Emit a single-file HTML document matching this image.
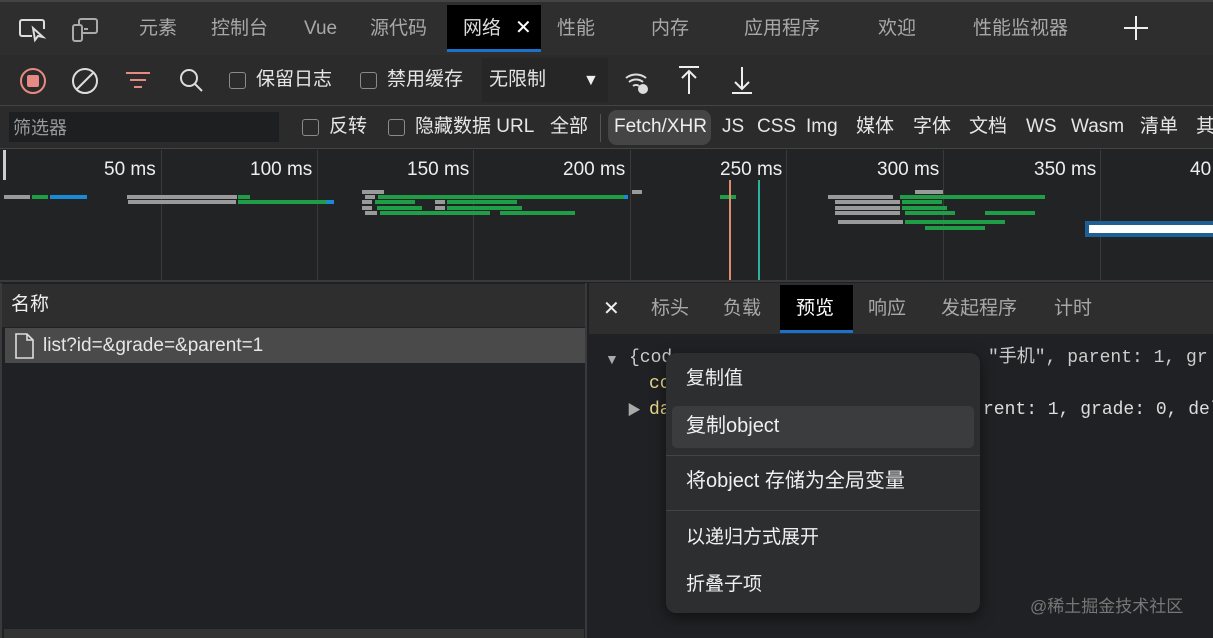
<!DOCTYPE html>
<html><head><meta charset="utf-8"><style>
*{box-sizing:border-box;margin:0;padding:0}
body{width:1213px;height:638px;overflow:hidden;background:#202124;font-family:"Liberation Sans","Noto Sans CJK SC",sans-serif;color:#d6d6d6;position:relative;font-size:19px;line-height:26px}
.a{position:absolute;white-space:nowrap}
.g{color:#a8a8a8}
.cb{position:absolute;width:17px;height:17px;border:1.5px solid #8a8a8a;border-radius:3px}
.vl{position:absolute;top:150px;width:1px;height:131px;background:#3a3a3a}
.b{position:absolute;height:4px}
.gr{background:#9a9a9a}.gn{background:#1f9d47}.bl{background:#1a8ad4}
.mono{font-family:"Liberation Mono","Noto Sans CJK SC",monospace;font-size:18px}
</style></head><body>
<div class="a" style="left:0;top:0;width:1213px;height:55px;background:#2e2e2e;border-top:2px solid #444"></div>
<svg class="a" style="left:18px;top:17px" width="30" height="28" viewBox="0 0 30 28" fill="none" stroke="#ddd" stroke-width="2"><path d="M14 19H4a2 2 0 0 1-2-2V5a2 2 0 0 1 2-2h20a2 2 0 0 1 2 2v7"/><path d="M15 11l2 12 3-4 5 1z" fill="#2e2e2e"/></svg>
<svg class="a" style="left:70px;top:17px" width="30" height="28" viewBox="0 0 30 28" fill="none" stroke="#aaa" stroke-width="2"><rect x="3" y="8" width="9" height="16" rx="2"/><path d="M9 8V4a2 2 0 0 1 2-2h14a2 2 0 0 1 2 2v10a2 2 0 0 1-2 2H12"/><path d="M14 12h4"/></svg>
<div class="a g" style="left:139px;top:16px">元素</div>
<div class="a g" style="left:211px;top:16px">控制台</div>
<div class="a g" style="left:304px;top:16px">Vue</div>
<div class="a g" style="left:370px;top:16px">源代码</div>
<div class="a" style="left:447px;top:5px;width:94px;height:47px;background:#000;border-bottom:3px solid #1a73c8"></div>
<div class="a" style="left:463px;top:16px;color:#ddd">网络</div>
<div class="a" style="left:515px;top:15px;color:#fff;font-size:20px">✕</div>
<div class="a g" style="left:557px;top:16px">性能</div>
<div class="a g" style="left:651px;top:16px">内存</div>
<div class="a g" style="left:744px;top:16px">应用程序</div>
<div class="a g" style="left:878px;top:16px">欢迎</div>
<div class="a g" style="left:973px;top:16px">性能监视器</div>
<svg class="a" style="left:1123px;top:15px" width="26" height="26" stroke="#eee" stroke-width="2"><path d="M13 1v24M1 13h24"/></svg>
<div class="a" style="left:0;top:55px;width:1213px;height:51px;background:#2b2b2b;border-bottom:1px solid #444"></div>
<svg class="a" style="left:19px;top:67px" width="28" height="28"><circle cx="14" cy="14" r="12" fill="none" stroke="#e88a84" stroke-width="2"/><rect x="8" y="8" width="12" height="12" rx="2" fill="#e88a84"/></svg>
<svg class="a" style="left:71px;top:67px" width="28" height="28" fill="none" stroke="#ddd" stroke-width="2"><circle cx="14" cy="14" r="12"/><path d="M6 22L22 6"/></svg>
<svg class="a" style="left:125px;top:70px" width="26" height="22" stroke="#e88a84" stroke-width="2"><path d="M1 3h24M5 10h16M9 17h8"/></svg>
<svg class="a" style="left:177px;top:67px" width="28" height="28" fill="none" stroke="#ddd" stroke-width="2"><circle cx="12" cy="11" r="8"/><path d="M18 17l7 7"/></svg>
<div class="cb" style="left:229px;top:72px"></div>
<div class="a" style="left:256px;top:67px;color:#e6e6e6">保留日志</div>
<div class="cb" style="left:360px;top:72px"></div>
<div class="a" style="left:387px;top:67px;color:#e6e6e6">禁用缓存</div>
<div class="a" style="left:482px;top:58px;width:126px;height:44px;background:#262626"></div>
<div class="a" style="left:489px;top:67px;color:#e6e6e6">无限制</div>
<div class="a" style="left:583px;top:68px;color:#eee;font-size:16px">▼</div>
<svg class="a" style="left:624px;top:68px" width="28" height="28" fill="none" stroke="#ddd" stroke-width="2"><path d="M2 10a16 16 0 0 1 20 0M5 14a11 11 0 0 1 14 0M9 18a5 5 0 0 1 6 0"/><circle cx="19" cy="21" r="4" fill="#ddd"/></svg>
<svg class="a" style="left:677px;top:65px" width="24" height="30" stroke="#eee" stroke-width="2" fill="none"><path d="M2 2h20M12 6v23M5 13l7-7 7 7"/></svg>
<svg class="a" style="left:730px;top:65px" width="24" height="30" stroke="#eee" stroke-width="2" fill="none"><path d="M2 28h20M12 2v22M5 17l7 7 7-7"/></svg>
<div class="a" style="left:0;top:106px;width:1213px;height:43px;background:#2b2b2b;border-bottom:1px solid #444"></div>
<div class="a" style="left:9px;top:112px;width:270px;height:30px;background:#1e1f21"></div>
<div class="a" style="left:13px;top:115px;color:#9a9a9a;font-size:18px">筛选器</div>
<div class="cb" style="left:302px;top:119px"></div>
<div class="a" style="left:329px;top:114px;color:#e6e6e6">反转</div>
<div class="cb" style="left:388px;top:119px"></div>
<div class="a" style="left:415px;top:114px;color:#e6e6e6">隐藏数据 URL</div>
<div class="a" style="left:550px;top:114px;color:#e6e6e6">全部</div>
<div class="a" style="left:600px;top:114px;width:1px;height:28px;background:#555"></div>
<div class="a" style="left:608px;top:110px;width:103px;height:35px;background:#454545;border-radius:9px"></div>
<div class="a" style="left:614px;top:114px;color:#eee">Fetch/XHR</div>
<div class="a" style="left:722px;top:114px;color:#e6e6e6">JS</div>
<div class="a" style="left:757px;top:114px;color:#e6e6e6">CSS</div>
<div class="a" style="left:806px;top:114px;color:#e6e6e6">Img</div>
<div class="a" style="left:856px;top:114px;color:#e6e6e6">媒体</div>
<div class="a" style="left:913px;top:114px;color:#e6e6e6">字体</div>
<div class="a" style="left:969px;top:114px;color:#e6e6e6">文档</div>
<div class="a" style="left:1026px;top:114px;color:#e6e6e6">WS</div>
<div class="a" style="left:1071px;top:114px;color:#e6e6e6">Wasm</div>
<div class="a" style="left:1140px;top:114px;color:#e6e6e6">清单</div>
<div class="a" style="left:1196px;top:114px;color:#e6e6e6">其</div>
<div class="a" style="left:0;top:149px;width:1213px;height:133px;background:#222324;border-bottom:2px solid #3a3a3a"></div>
<div class="a" style="left:3px;top:150px;width:3px;height:30px;background:#ccc"></div>
<div class="vl" style="left:161px"></div><div class="vl" style="left:317px"></div><div class="vl" style="left:473px"></div><div class="vl" style="left:630px"></div><div class="vl" style="left:786px"></div><div class="vl" style="left:943px"></div><div class="vl" style="left:1100px"></div>
<div class="a" style="left:104px;top:157px;color:#eee">50 ms</div>
<div class="a" style="left:250px;top:157px;color:#eee">100 ms</div>
<div class="a" style="left:407px;top:157px;color:#eee">150 ms</div>
<div class="a" style="left:563px;top:157px;color:#eee">200 ms</div>
<div class="a" style="left:720px;top:157px;color:#eee">250 ms</div>
<div class="a" style="left:877px;top:157px;color:#eee">300 ms</div>
<div class="a" style="left:1034px;top:157px;color:#eee">350 ms</div>
<div class="a" style="left:1190px;top:157px;color:#eee">40</div>
<div class="b gr" style="left:4px;top:195px;width:26px"></div><div class="b gn" style="left:32px;top:195px;width:16px"></div><div class="b bl" style="left:50px;top:195px;width:37px"></div>
<div class="b gr" style="left:127px;top:195px;width:110px"></div><div class="b gn" style="left:238px;top:195px;width:12px"></div>
<div class="b gr" style="left:128px;top:200px;width:108px"></div><div class="b gn" style="left:238px;top:200px;width:90px"></div><div class="b bl" style="left:326px;top:200px;width:8px"></div>
<div class="b gr" style="left:362px;top:190px;width:22px"></div>
<div class="b gr" style="left:365px;top:195px;width:10px"></div><div class="b gn" style="left:378px;top:195px;width:246px"></div><div class="b bl" style="left:624px;top:195px;width:4px"></div>
<div class="b gr" style="left:362px;top:200px;width:10px"></div><div class="b gn" style="left:375px;top:200px;width:40px"></div><div class="b gr" style="left:435px;top:200px;width:10px"></div><div class="b gn" style="left:447px;top:200px;width:70px"></div>
<div class="b gr" style="left:362px;top:206px;width:10px"></div><div class="b gn" style="left:377px;top:206px;width:45px"></div><div class="b gr" style="left:435px;top:206px;width:10px"></div><div class="b gn" style="left:447px;top:206px;width:75px"></div>
<div class="b gr" style="left:365px;top:211px;width:12px"></div><div class="b gn" style="left:380px;top:211px;width:110px"></div><div class="b gn" style="left:500px;top:211px;width:75px"></div>
<div class="b gr" style="left:632px;top:190px;width:10px"></div>
<div class="b gn" style="left:720px;top:195px;width:16px"></div>
<div class="a" style="left:729px;top:180px;width:2px;height:100px;background:#e08a70"></div>
<div class="a" style="left:758px;top:180px;width:2px;height:100px;background:#2bb3a0"></div>
<div class="b gr" style="left:828px;top:195px;width:65px"></div><div class="b gn" style="left:900px;top:195px;width:110px"></div><div class="b gn" style="left:1000px;top:195px;width:45px"></div>
<div class="b gr" style="left:915px;top:190px;width:28px"></div>
<div class="b gr" style="left:835px;top:200px;width:65px"></div><div class="b gn" style="left:902px;top:200px;width:40px"></div>
<div class="b gr" style="left:835px;top:206px;width:65px"></div><div class="b gn" style="left:902px;top:206px;width:45px"></div>
<div class="b gr" style="left:835px;top:211px;width:65px"></div><div class="b gn" style="left:905px;top:211px;width:50px"></div><div class="b gn" style="left:985px;top:211px;width:50px"></div>
<div class="b gr" style="left:838px;top:220px;width:65px"></div><div class="b gn" style="left:905px;top:220px;width:100px"></div>
<div class="b gn" style="left:925px;top:226px;width:60px"></div>
<div class="a" style="left:1085px;top:221px;width:128px;height:16px;background:#1e5f96"></div>
<div class="a" style="left:1089px;top:225px;width:124px;height:8px;background:#fff"></div>
<div class="a" style="left:0;top:283px;width:587px;height:355px;background:#202124;border-left:2px solid #3a3a3a;border-right:2px solid #3a3a3a"></div>
<div class="a" style="left:2px;top:284px;width:583px;height:43px;background:#2e2e2e"></div>
<div class="a" style="left:11px;top:292px;color:#eee">名称</div>
<div class="a" style="left:5px;top:328px;width:580px;height:35px;background:#4a4a4a"></div>
<svg class="a" style="left:14px;top:333px" width="22" height="26" fill="none" stroke="#ddd" stroke-width="1.6"><path d="M2 1h11l6 6v18H2z M13 1v6h6"/></svg>
<div class="a" style="left:43px;top:333px;color:#e6e6e6">list?id=&amp;grade=&amp;parent=1</div>
<div class="a" style="left:4px;top:629px;width:580px;height:9px;background:#333"></div>
<div class="a" style="left:589px;top:283px;width:624px;height:51px;background:#2e2e2e"></div>
<div class="a" style="left:603px;top:296px;color:#eee;font-size:20px">✕</div>
<div class="a g" style="left:651px;top:296px">标头</div>
<div class="a g" style="left:723px;top:296px">负载</div>
<div class="a" style="left:780px;top:285px;width:73px;height:48px;background:#000;border-bottom:3px solid #1a73c8"></div>
<div class="a" style="left:796px;top:296px;color:#fff">预览</div>
<div class="a g" style="left:868px;top:296px">响应</div>
<div class="a g" style="left:941px;top:296px">发起程序</div>
<div class="a g" style="left:1054px;top:296px">计时</div>
<div class="a" style="left:605px;top:346px;color:#aaa;font-size:14px">▼</div>
<div class="a mono" style="left:629px;top:345px;color:#ccc">{cod</div>
<div class="a mono" style="left:988px;top:345px;color:#ccc">"手机", parent: 1, gr</div>
<div class="a mono" style="left:649px;top:371px;color:#e8d98a">co</div>
<div class="a" style="left:627px;top:397px;color:#aaa;font-size:14px">▶</div>
<div class="a mono" style="left:649px;top:397px;color:#e8d98a">da</div>
<div class="a mono" style="left:983px;top:397px;color:#ddd">rent: 1, grade: 0, del</div>
<div class="a" style="left:1030px;top:594px;color:#777;font-size:17px">@稀土掘金技术社区</div>
<div class="a" style="left:666px;top:353px;width:314px;height:260px;background:#2d2e30;border-radius:10px;box-shadow:0 4px 14px rgba(0,0,0,.5)"></div>
<div class="a" style="left:686px;top:366px;color:#f0f0f0">复制值</div>
<div class="a" style="left:672px;top:406px;width:302px;height:42px;background:#3b3c3e;border-radius:5px"></div>
<div class="a" style="left:686px;top:413px;color:#f0f0f0;font-size:20px">复制object</div>
<div class="a" style="left:666px;top:455px;width:314px;height:1px;background:#444"></div>
<div class="a" style="left:686px;top:468px;color:#f0f0f0;font-size:20px">将object 存储为全局变量</div>
<div class="a" style="left:666px;top:510px;width:314px;height:1px;background:#444"></div>
<div class="a" style="left:686px;top:525px;color:#f0f0f0">以递归方式展开</div>
<div class="a" style="left:686px;top:572px;color:#f0f0f0">折叠子项</div>
</body></html>
